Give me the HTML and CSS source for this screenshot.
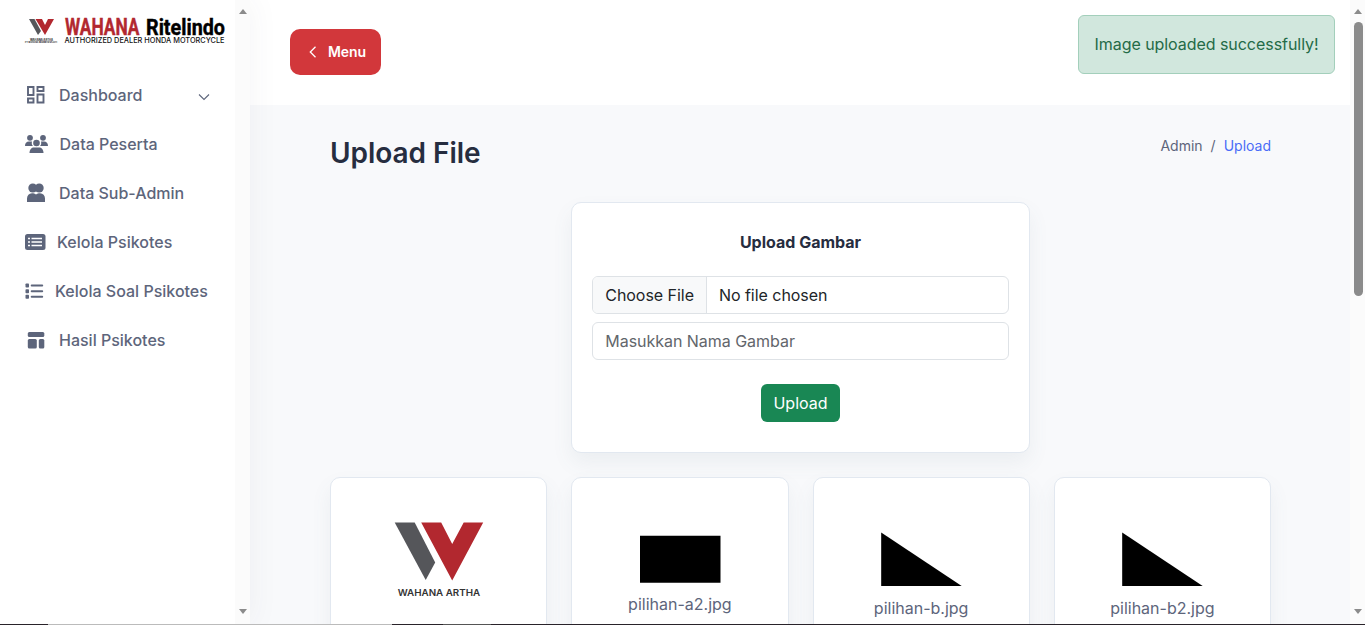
FILE: index.html
```html
<!DOCTYPE html>
<html lang="id">
<head>
<meta charset="utf-8">
<title>Upload File</title>
<link rel="stylesheet" href="styles.css">
</head>
<body>
<div class="app">
  <aside class="sidebar">
    <div class="side-body">
      <svg class="logo" width="202" height="30" viewBox="0 0 202 30">
        <path fill="#55565a" d="M4 3h5.500l6.500 12-3 4z"/>
        <path fill="#b2282f" d="M10.500 3h6.500l3 6 3-6h6l-9 16z"/>
        <text class="micro" x="5" y="25" textLength="23" lengthAdjust="spacingAndGlyphs">WAHANA ARTHA</text>
        <text class="micro faint" x="0" y="27" textLength="32" lengthAdjust="spacingAndGlyphs">PT WAHANA MAKMUR SEJATI</text>
        <text class="brand red" x="40" y="19.400" textLength="74.500" lengthAdjust="spacingAndGlyphs">WAHANA</text>
        <text class="brand small" x="121" y="19.400" textLength="79" lengthAdjust="spacingAndGlyphs">Ritelindo</text>
        <text class="tag" x="39.500" y="27" textLength="160" lengthAdjust="spacingAndGlyphs">AUTHORIZED DEALER HONDA MOTORCYCLE</text>
      </svg>
      <nav class="nav">
        <a class="item"><svg class="ico dash" width="22" height="22" viewBox="0 0 22 22"><g fill="none" stroke="currentColor" stroke-width="1.900"><path d="M3 3h5.500v8H3zM12.500 3h6v4h-6zM3 14.500h5.500v4H3zM12.500 10.500h6v8h-6z"/></g></svg><span>Dashboard</span><svg class="chev" width="12" height="8" viewBox="0 0 12 8"><path d="M1 1.500l5 5 5-5" fill="none" stroke="currentColor" stroke-width="1.100"/></svg></a>
        <a class="item"><svg class="ico wide" width="24" height="22" viewBox="0 0 24 22"><g fill="currentColor"><circle cx="5" cy="4.800" r="2.900"/><circle cx="18" cy="4.800" r="2.900"/><path d="M0 13c0-3 1.500-4.500 4-4.500h3c-.6 2 0 3.500 1 4.500zM23 13c0-3-1.500-4.500-4-4.500h-3c.6 2 0 3.500-1 4.500z"/><circle cx="11.500" cy="10" r="3.300"/><path d="M4.500 20c0-3.500 2-5.500 4.500-5.500h5c2.500 0 4.500 2 4.500 5.500z"/></g></svg><span>Data Peserta</span></a>
        <a class="item"><svg class="ico" width="22" height="22" viewBox="0 0 22 22"><g fill="currentColor"><circle cx="7.800" cy="6" r="4.500"/><circle cx="14.200" cy="6" r="4.500"/><path d="M2 20v-3.500c0-3 2-5 5-5.200 1.500 0 3 .4 4 1.200 1-.8 2.500-1.200 4-1.200 3 .2 5 2.200 5 5.200V20z"/></g></svg><span>Data Sub-Admin</span></a>
        <a class="item"><svg class="ico card-ico" width="22" height="22" viewBox="0 0 22 22"><rect x="0" y="3" width="20.500" height="16" rx="2.500" fill="currentColor"/><path d="M3 7.500h2M6.500 7.500h10.500M3 11h2M6.500 11h10.500M3 14.500h2M6.500 14.500h10.500" stroke="#fff" stroke-width="1.400"/></svg><span>Kelola Psikotes</span></a>
        <a class="item"><svg class="ico list-ico" width="20" height="22" viewBox="0 0 20 22"><g fill="currentColor"><rect x=".5" y="3.500" width="3.500" height="4" rx=".8"/><rect x=".5" y="9.200" width="3.500" height="4" rx=".8"/><rect x=".5" y="14.800" width="3.500" height="4" rx=".8"/><rect x="5.700" y="4.500" width="12.500" height="2" rx="1"/><rect x="5.700" y="10.200" width="12.500" height="2" rx="1"/><rect x="5.700" y="15.800" width="12.500" height="2" rx="1"/></g></svg><span>Kelola Soal Psikotes</span></a>
        <a class="item"><svg class="ico" width="22" height="22" viewBox="0 0 22 22"><g fill="currentColor"><rect x="2.800" y="3" width="16.500" height="5" rx="1.500"/><rect x="2.800" y="10" width="9" height="9.500" rx="1.500"/><rect x="13.800" y="10" width="5.500" height="9.500" rx="1.500"/></g></svg><span>Hasil Psikotes</span></a>
      </nav>
    </div>
    <div class="scroll"><i class="up"></i><i class="down"></i></div>
  </aside>
  <main class="main">
    <header class="top">
      <button class="menu"><svg width="8" height="12" viewBox="0 0 8 12"><path d="M6.500 .8L1.300 6l5.200 5.200" fill="none" stroke="currentColor" stroke-width="1.300"/></svg><span>Menu</span></button>
      <div class="alert">Image uploaded successfully!</div>
    </header>
    <div class="content">
      <div class="title-row">
        <h1>Upload File</h1>
        <div class="crumbs"><span>Admin</span><span>/</span><a>Upload</a></div>
      </div>
      <div class="grid">
        <section class="card form">
          <h2>Upload Gambar</h2>
          <div class="file"><span class="choose">Choose File</span><span class="none">No file chosen</span></div>
          <input class="name" placeholder="Masukkan Nama Gambar">
          <button class="submit">Upload</button>
        </section>
        <section class="card pic first"><svg width="92" height="80" viewBox="0 0 92 80"><g transform="translate(.7 .4)"><path fill="#55565a" d="M1 1h20l20.500 40L32 58.500z"/><path fill="#b2282f" d="M27.500 1h20L58.500 22.500 70 1h19.500l-31 58z"/><text class="artha" x="4" y="74.800" textLength="82.500" lengthAdjust="spacingAndGlyphs">WAHANA ARTHA</text></g></svg></section>
        <section class="card pic second"><svg width="82" height="48" viewBox="0 0 82 48"><path d="M1 .8h80.500v47H1z"/></svg><p>pilihan-a2.jpg</p></section>
        <section class="card pic"><svg width="82" height="55" viewBox="0 0 82 55"><path d="M1.200 .5v53.500h80.500z"/></svg><p>pilihan-b.jpg</p></section>
        <section class="card pic"><svg width="82" height="55" viewBox="0 0 82 55"><path d="M1.200 .5v53.500h80.500z"/></svg><p>pilihan-b2.jpg</p></section>
      </div>
    </div>
  </main>
  <div class="scroll page"><i class="up"></i><b class="thumb"></b><i class="down"></i></div>
</div>
<div class="edge"><i class="dark"></i><i class="light"></i><i class="dark mid"></i><i class="gray"></i><i class="dark rest"></i></div>
</body>
</html>
```
FILE: styles.css
```css
* { box-sizing: border-box; }
body { margin: 0; height: 625px; overflow: hidden; font: 16px/24px Inter, sans-serif; color: #5d657b; background: #fff; }
.app { display: flex; height: 624px; overflow: hidden; }
.sidebar { display: flex; width: 250px; flex: none; background: #fff; box-shadow: 0 0 30px rgba(60, 75, 90, .06); z-index: 1; }
.side-body { width: 235px; padding: 16px 25px 0; }
.logo { display: block; overflow: visible; }
.brand { font: 700 23px Roboto, sans-serif; stroke: #000; stroke-width: .4px; }
.small { font-size: 21.500px; }
.red { fill: #b2282f; stroke: #b2282f; }
.tag { font: 500 7px Inter, sans-serif; fill: #111; }
.micro { font: 700 2.800px Inter, sans-serif; fill: #222; }
.faint { font-size: 2px; }
.nav { display: flex; flex-direction: column; padding-top: 24px; }
.item { display: flex; align-items: center; height: 49px; font-weight: 500; white-space: nowrap; }
.ico { flex: none; margin-right: 12px; }
.wide { margin-right: 10.500px; }
.card-ico { margin-right: 10px; }
.list-ico { margin-right: 10px; }
.chev { margin: 4px 0 0 auto; }
.scroll { width: 15px; flex: none; background: #fbfbfb; display: flex; flex-direction: column; align-items: center; padding: 9px 0 10px; }
.up { border: 4.500px solid transparent; border-top: 0; border-bottom: 5px solid #8b8b8b; }
.down { border: 4.500px solid transparent; border-bottom: 0; border-top: 5px solid #8b8b8b; margin-top: auto; }
.page { padding-left: 1px; }
.thumb { width: 9px; height: 274px; margin-top: 8px; border-radius: 5px; background: #8b8b8b; }
.main { flex: 1; min-width: 0; background: #f8f9fb; }
.top { display: flex; justify-content: space-between; align-items: flex-start; height: 105px; background: #fff; padding: 15px 15px 0 40px; }
.menu { display: flex; align-items: center; gap: 11px; width: 91px; height: 46px; margin-top: 14px; padding: 0 0 0 19px; border: 0; border-radius: 10px; background: #d2373b; color: #fff; font: 600 14px Inter, sans-serif; letter-spacing: -.1px; }
.menu span { padding-bottom: 2px; }
.alert { width: 257px; height: 59px; padding: 16px 15.500px; border: 1px solid #a3cfbb; border-radius: 6px; background: #d1e7dd; color: #246b47; white-space: nowrap; letter-spacing: -.05px; }
.content { padding: 30px 79px 0 80px; }
.title-row { display: flex; justify-content: space-between; height: 67px; }
h1 { margin: 0; font-size: 28px; line-height: 36px; font-weight: 600; color: #262d3f; letter-spacing: -.05px; }
.crumbs { display: flex; gap: 8px; font-size: 14px; line-height: 22px; color: #5d657b; }
.crumbs a { color: #4a6cf7; }
.grid { display: grid; grid-template-columns: repeat(4, 1fr); gap: 24px; }
.card { border: 1px solid #e2e8f0; border-radius: 10px; background: #fff; box-shadow: 0 10px 20px rgba(92, 115, 130, .08); }
.form { grid-column: 2 / 4; height: 251px; padding: 27px 20px 0; display: flex; flex-direction: column; align-items: center; }
h2 { margin: 0 0 22px; font-size: 16px; line-height: 24px; font-weight: 700; color: #262d3f; }
.file { display: flex; width: 100%; height: 38px; border: 1px solid #dee2e6; border-radius: 6px; overflow: hidden; line-height: 36px; color: #212529; letter-spacing: -.04px; }
.choose { padding: 0 12px; background: #f8f9fa; border-right: 1px solid #dee2e6; }
.none { padding-left: 12px; }
.name { width: 100%; height: 38px; margin: 8px 0 24px; padding: 0 12px; border: 1px solid #dee2e6; border-radius: 6px; font: 16px Inter, sans-serif; letter-spacing: -.03px; }
.name::placeholder { color: #62666b; }
.submit { width: 79px; height: 38px; padding: 0; border: 0; border-radius: 6px; background: #198754; color: #fff; font: 16px Inter, sans-serif; }
.pic { height: 220px; padding-top: 54px; display: flex; flex-direction: column; align-items: center; }
.pic svg { display: block; flex: none; }
.first { grid-column: 1; padding-top: 43px; }
.second { padding-top: 57px; }
.pic p { margin: 9px 0 0; }
.artha { font: 600 9.200px Inter, sans-serif; fill: #333; }
.edge { display: flex; height: 1px; }
.dark { width: 48px; background: #29232a; }
.light { width: 344px; background: #bbb; }
.mid { width: 51px; }
.gray { width: 48px; background: #555; }
.rest { flex: 1; }
```
